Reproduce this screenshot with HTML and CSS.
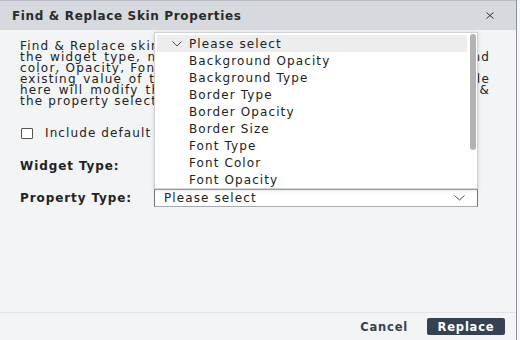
FILE: index.html
```html
<!DOCTYPE html>
<html lang="en">
<head>
  <meta charset="UTF-8" />
  <title>Find &amp; Replace Skin Properties</title>
  <link rel="stylesheet" href="styles.css">
</head>
<body>
  <div class="dialog">
    <header class="dialog-head">
      <span class="title">Find &amp; Replace Skin Properties</span>
      <button class="close" aria-label="Close">
        <svg width="8" height="7" viewBox="0 0 8 7"><path d="M0.5 0.5 L7.5 6.5 M7.5 0.5 L0.5 6.5" stroke="#333" stroke-width="1" fill="none"/></svg>
      </button>
    </header>

    <div class="dialog-body">
      <p class="desc">
        <span class="line">Find &amp; Replace skin properties lets you pick</span>
        <span class="line full">the widget type, name of the property such as Background and</span>
        <span class="line">color, Opacity, Font Type etc. and replace the</span>
        <span class="line full">existing value of the property with a new value. Changes made</span>
        <span class="line full">here will modify the skin of all selected widgets of this type &amp;</span>
        <span class="line">the property selected.</span>
      </p>

      <label class="check">
        <span class="box"></span>
        <span>Include default skins</span>
      </label>

      <div class="field first">
        <span class="field-label">Widget Type:</span>
      </div>

      <div class="field">
        <span class="field-label">Property Type:</span>
        <div class="select-wrap">
          <div class="select">
            <span>Please select</span>
            <svg width="11" height="6" viewBox="0 0 11 6"><path d="M0.5 0.5 L5.5 5 L10.5 0.5" stroke="#555" stroke-width="1" fill="none"/></svg>
          </div>

          <!-- open dropdown -->
          <div class="menu">
            <ul class="options">
              <li class="selected">
                <svg class="tick" width="10" height="6" viewBox="0 0 10 6"><path d="M0.5 0.5 L5 5 L9.5 0.5" stroke="#555" stroke-width="1" fill="none"/></svg>
                Please select
              </li>
              <li>Background Opacity</li>
              <li>Background Type</li>
              <li>Border Type</li>
              <li>Border Opacity</li>
              <li>Border Size</li>
              <li>Font Type</li>
              <li>Font Color</li>
              <li>Font Opacity</li>
            </ul>
            <div class="scroll-thumb"></div>
          </div>
        </div>
      </div>
    </div>

    <footer class="dialog-foot">
      <button class="btn-link">Cancel</button>
      <button class="btn-primary">Replace</button>
    </footer>
  </div>
</body>
</html>
```

FILE: styles.css
```css
body {
  margin: 0;
  background: #f7f7f7;
  font-family: 'DejaVu Sans', sans-serif;
  color: #222;
}

.dialog {
  width: 516px;
  height: 340px;
  border-right: 1px solid #8c9098;
  background: #f3f4f6;
  display: flex;
  flex-direction: column;
}

.dialog-head {
  height: 30px;
  box-sizing: border-box;
  border-top: 1px solid #b9bdc3;
  background: #d6d9dd;
  display: flex;
  align-items: center;
  justify-content: space-between;
  padding: 0 22px 0 12px;
}

.title {
  font-size: 12px;
  font-weight: bold;
  letter-spacing: 0.65px;
  color: #2a2a2a;
}

.close {
  border: none;
  background: none;
  padding: 0;
  display: flex;
}

.dialog-body {
  flex: 1;
  padding: 11px 20px 0;
}

.desc {
  margin: 0;
  width: 470px;
  font-size: 12px;
  line-height: 11px;
  letter-spacing: 1.2px;
}

.line {
  display: block;
  white-space: nowrap;
}

/* lines that run to the right edge */
.line.full {
  text-align: justify;
  text-align-last: justify;
}

.check {
  display: flex;
  align-items: center;
  gap: 12px;
  margin-top: 19px;
  margin-left: 1px;
  font-size: 12px;
  letter-spacing: 1.1px;
}

.box {
  width: 10px;
  height: 9px;
  border: 1px solid #555;
  border-radius: 1px;
  background: #fff;
}

.field {
  display: flex;
  align-items: center;
  height: 18px;
  margin-top: 14px;
}

.field.first {
  margin-top: 17px;
}

.field-label {
  width: 134px;
  font-size: 12px;
  font-weight: bold;
  letter-spacing: 0.9px;
}

.select-wrap {
  position: relative;
  width: 324px;
}

.select {
  height: 18px;
  box-sizing: border-box;
  background: #fff;
  border: 1px solid #a7abb1;
  border-left-color: #6f747b;
  border-right-color: #6f747b;
  display: flex;
  align-items: center;
  justify-content: space-between;
  padding: 0 12px 0 9px;
  font-size: 12px;
  letter-spacing: 1.1px;
}

.menu {
  position: absolute;
  left: 0;
  right: 0;
  bottom: 100%;
  height: 157px;
  box-sizing: border-box;
  background: #fff;
  border: 1px solid #d0d2d6;
  box-shadow: 0 1px 4px rgba(0, 0, 0, 0.15);
  overflow: hidden;
}

.options {
  list-style: none;
  margin: 0;
  padding: 2px 10px 0 2px;
}

.options li {
  height: 17px;
  display: flex;
  align-items: center;
  padding-left: 32px;
  font-size: 12px;
  letter-spacing: 1.1px;
}

.options li.selected {
  background: #ededed;
  padding-left: 15px;
}

.tick {
  margin-right: 7px;
}

.scroll-thumb {
  position: absolute;
  top: 1px;
  right: 1px;
  width: 6px;
  height: 116px;
  border-radius: 3px;
  background: #b3b3b3;
}

.dialog-foot {
  height: 27px;
  border-top: 1px solid #e1e3e7;
  display: flex;
  align-items: center;
  justify-content: flex-end;
  gap: 19px;
  padding-right: 11px;
}

.btn-link {
  border: none;
  background: none;
  padding: 0;
  font-family: inherit;
  font-size: 11.5px;
  font-weight: bold;
  letter-spacing: 0.8px;
  color: #374151;
}

.btn-primary {
  width: 78px;
  height: 17px;
  border: none;
  border-radius: 2px;
  background: #364152;
  color: #fff;
  font-family: inherit;
  font-size: 11.5px;
  font-weight: bold;
  letter-spacing: 0.8px;
}
```
